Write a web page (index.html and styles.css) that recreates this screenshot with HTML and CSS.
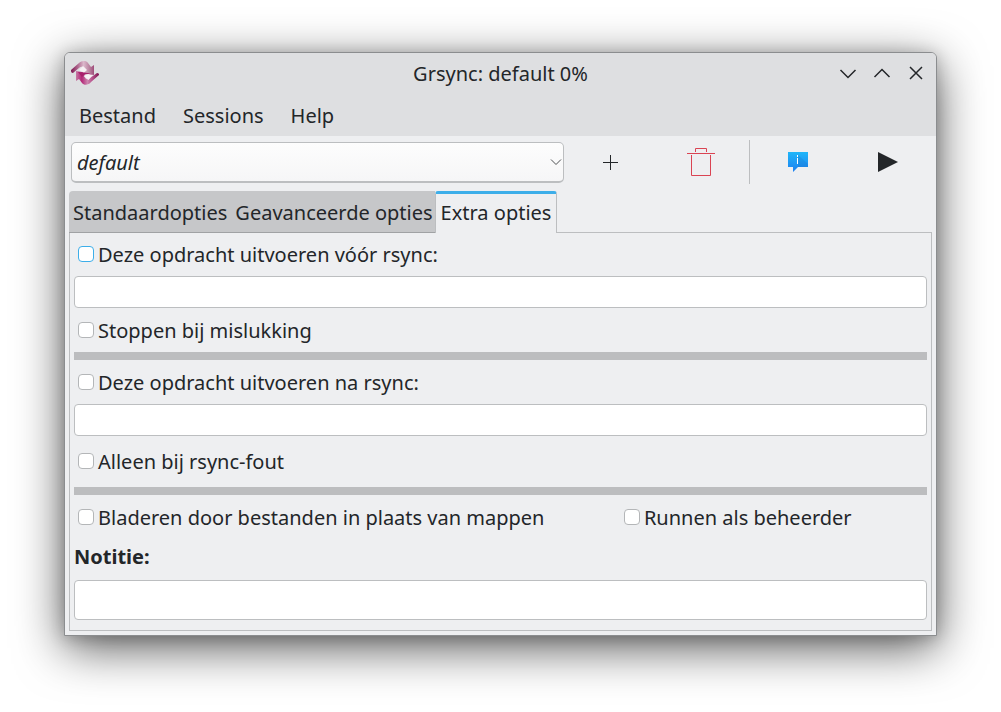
FILE: index.html
```html
<!DOCTYPE html>
<html lang="nl">
<head>
<meta charset="utf-8">
<title>Grsync: default 0%</title>
<link rel="stylesheet" href="styles.css">
</head>
<body>
<main class="window">
  <header class="titlebar">
    <svg class="app-icon" width="28" height="28" viewBox="0 0 28 28" aria-hidden="true">
      <defs>
        <linearGradient id="top" x1="0" y1="0" x2="1" y2="0"><stop offset="0" stop-color="#7d1650"/><stop offset=".3" stop-color="#b06a90"/><stop offset=".55" stop-color="#dcb9cc"/><stop offset=".8" stop-color="#b9829f"/><stop offset="1" stop-color="#a04c7a"/></linearGradient>
        <linearGradient id="low" x1="0" y1="0" x2="1" y2="0"><stop offset="0" stop-color="#c777a4"/><stop offset=".25" stop-color="#b42878"/><stop offset=".5" stop-color="#cc86ae"/><stop offset=".7" stop-color="#b8528c"/><stop offset="1" stop-color="#7d1650"/></linearGradient>
      </defs>
      <path d="M0 10 L8 3 C10 1 15 0 17 3 L20 7 L23 5 V15 L12 13 L15 10 C13 6 10 6 8 8 L2 13 C0 13 0 11 0 10Z" fill="url(#top)"/>
      <path d="M28 15 L20 22 C18 25 13 26 11 23 L8 19 L5 21 V11 L16 13 L13 16 C15 20 17 20 19 18 L26 13 C28 13 28 14 28 15Z" fill="url(#low)"/>
      <path d="M7 12l10 1 5 2-8-1-3 3z" fill="#a8206c"/>
      <path d="M8 10l4-4 4 4-3 2.500zM13 16l4-2 4.500 1-4 5z" fill="#f7f0f4"/>
    </svg>
    <h1 class="title">Grsync: default 0%</h1>
    <div class="window-buttons">
      <button class="window-button" aria-label="Minimaliseren"><svg width="18" height="18" viewBox="0 0 18 18"><path d="M1.500 5 9 12.500 16.500 5"/></svg></button>
      <button class="window-button" aria-label="Maximaliseren"><svg width="18" height="18" viewBox="0 0 18 18"><path d="M1.500 12 9 4.500l7.500 7.500"/></svg></button>
      <button class="window-button" aria-label="Sluiten"><svg width="18" height="18" viewBox="0 0 18 18"><path d="M3 2l12 12M15 2 3 14"/></svg></button>
    </div>
  </header>
  <nav class="menubar">
    <button class="menu">Bestand</button>
    <button class="menu">Sessions</button>
    <button class="menu">Help</button>
  </nav>
  <div class="toolbar">
    <div class="combo">
      <select class="combo-select" aria-label="Sessie"><option>default</option></select>
      <svg class="combo-arrow" width="12" height="8" viewBox="0 0 12 8" aria-hidden="true"><path d="M1 1.500 6 6.500l5-5"/></svg>
    </div>
    <button class="tool" aria-label="Toevoegen"><svg width="16" height="16" viewBox="0 0 16 16"><path d="M7 1h1v15H7zM0 8h15v1H0z" fill="#232629"/></svg></button>
    <button class="tool" aria-label="Verwijderen"><svg width="28" height="28" viewBox="0 0 28 28"><path d="M8.500 4V.5h11V4M0 5.500h28M4.500 7v20.500h19V7" fill="none" stroke="#da4453"/></svg></button>
    <span class="tool-separator"></span>
    <button class="tool" aria-label="Simuleren"><svg width="20" height="20" viewBox="0 0 20 20">
      <defs><linearGradient id="bubble" x1="0" y1="0" x2="0" y2="1"><stop offset="0" stop-color="#1fb6f9"/><stop offset="1" stop-color="#1d80f0"/></linearGradient></defs>
      <path d="M0 0h20v15H10l-5 5v-5H0z" fill="url(#bubble)"/><path d="M10 3l10 9v3H10z" fill="#1468b8" opacity=".2"/><path d="M9 3h1v2H9zM9 6h1v6H9z" fill="#fff"/></svg></button>
    <button class="tool" aria-label="Uitvoeren"><svg width="20" height="20" viewBox="0 0 20 20"><path d="M0 0l20 10L0 20z" fill="#232629"/></svg></button>
  </div>
  <div class="tabs" role="tablist">
    <button class="tab tab-first" role="tab">Standaardopties</button>
    <button class="tab" role="tab">Geavanceerde opties</button>
    <button class="tab tab-active" role="tab" aria-selected="true">Extra opties</button>
    <span class="tabs-rest"></span>
  </div>
  <section class="panel">
    <label class="check check-first"><input class="box box-focus" type="checkbox"><span class="check-text">Deze opdracht uitvoeren vóór rsync:</span></label>
    <input class="field" type="text" aria-label="Opdracht vóór rsync">
    <label class="check"><input class="box" type="checkbox"><span class="check-text">Stoppen bij mislukking</span></label>
    <hr class="bar">
    <label class="check"><input class="box" type="checkbox"><span class="check-text">Deze opdracht uitvoeren na rsync:</span></label>
    <input class="field" type="text" aria-label="Opdracht na rsync">
    <label class="check check-tall"><input class="box" type="checkbox"><span class="check-text">Alleen bij rsync-fout</span></label>
    <hr class="bar">
    <div class="pair">
      <label class="check"><input class="box" type="checkbox"><span class="check-text">Bladeren door bestanden in plaats van mappen</span></label>
      <label class="check"><input class="box" type="checkbox"><span class="check-text">Runnen als beheerder</span></label>
    </div>
    <label class="note-label" for="note">Notitie:</label>
    <textarea class="field note" id="note"></textarea>
  </section>
</main>
</body>
</html>
```
FILE: styles.css
```css
* { box-sizing: border-box; }

body {
  margin: 0;
  padding: 52px 64px 76px;
  background: #fff;
  color: #232629;
  font: 20px/28px "Noto Sans", sans-serif;
}

button, input, select, textarea {
  margin: 0;
  color: inherit;
  font: inherit;
}

button {
  padding: 0;
  border: 0;
  background: none;
}

.window {
  border: 1px solid #8b8d8f;
  border-radius: 6px 6px 0 0;
  background: #eeeff1;
  box-shadow: 0 12px 48px rgba(0, 0, 0, .65), 0 2px 16px rgba(0, 0, 0, .2);
}

.titlebar {
  display: grid;
  grid-template-columns: 1fr auto 1fr;
  align-items: center;
  height: 42px;
  padding: 0 3px;
  border-radius: 5px 5px 0 0;
  background: #dedfe1;
}

.app-icon { margin-left: 3px; }

.title {
  margin: 0;
  font-size: 20px;
  font-weight: 400;
}

.window-buttons {
  display: flex;
  justify-content: flex-end;
}

.window-button {
  display: grid;
  place-items: center;
  width: 34px;
  height: 34px;
}

.window-button svg {
  fill: none;
  stroke: #232629;
  stroke-width: 1.5;
}

.menubar {
  display: flex;
  gap: 27px;
  height: 41px;
  padding: 0 14px;
  background: #dedfe1;
}

.toolbar {
  display: flex;
  align-items: center;
  height: 52px;
  padding: 0 3px 0 6px;
}

.combo {
  display: grid;
  flex: 1;
  align-items: center;
  margin-right: 2px;
}

.combo-select {
  grid-area: 1 / 1;
  height: 41px;
  padding: 3px 24px 0 5px;
  border: 1px solid #bcbec0;
  border-bottom-width: 2px;
  border-radius: 5px;
  appearance: none;
  background: linear-gradient(#fdfdfd, #f6f6f7);
  font-style: italic;
}

.combo-arrow {
  grid-area: 1 / 1;
  justify-self: end;
  margin-right: 2px;
  fill: none;
  stroke: #4d5052;
  pointer-events: none;
}

.tool {
  display: grid;
  place-items: center;
  width: 90px;
  height: 44px;
}

.tool-separator {
  width: 1px;
  height: 44px;
  margin: 0 3px;
  background: #bcbec0;
}

.tabs {
  display: flex;
  height: 42px;
  margin: 3px 4px 0;
}

.tab {
  padding: 3px 2px 0 6px;
  border-bottom: 1px solid #a0a2a4;
  background: #c6c7c9;
}

.tab-first {
  padding-left: 4px;
  border-top-left-radius: 4px;
}

.tab-active {
  padding: 0 5px 2px;
  border: 1px solid #bcbec0;
  border-top: 3px solid #3daee9;
  border-bottom: 0;
  border-radius: 3px 3px 0 0;
  background: #eeeff1;
}

.tabs-rest {
  flex: 1;
  border-bottom: 1px solid #bcbec0;
}

.panel {
  display: flex;
  flex-direction: column;
  margin: 0 4px 4px;
  padding: 0 4px 10px;
  border: 1px solid #bcbec0;
  border-top: 0;
}

.check {
  display: flex;
  align-items: center;
  gap: 4px;
  height: 44px;
  padding-left: 4px;
}

.check-first {
  height: 43px;
  padding-bottom: 1px;
}

.check-tall {
  height: 51px;
  padding-bottom: 1px;
}

.check-text { padding-top: 2px; }

.box {
  width: 16px;
  height: 16px;
  border: 1px solid #b4b6b8;
  border-radius: 4px;
  appearance: none;
  background: #fff;
}

.box-focus { border-color: #3daee9; }

.field {
  width: 100%;
  height: 32px;
  padding: 0 6px;
  border: 1px solid #bcbec0;
  border-radius: 4px;
  background: #fff;
}

.bar {
  width: 100%;
  height: 8px;
  margin: 0;
  border: 0;
  background: #bcbdbf;
}

.pair {
  display: grid;
  grid-template-columns: 16fr 9fr;
}

.note-label {
  padding: 4px 0 9px;
  font-weight: 700;
}

.note {
  height: 40px;
  resize: none;
}
```
